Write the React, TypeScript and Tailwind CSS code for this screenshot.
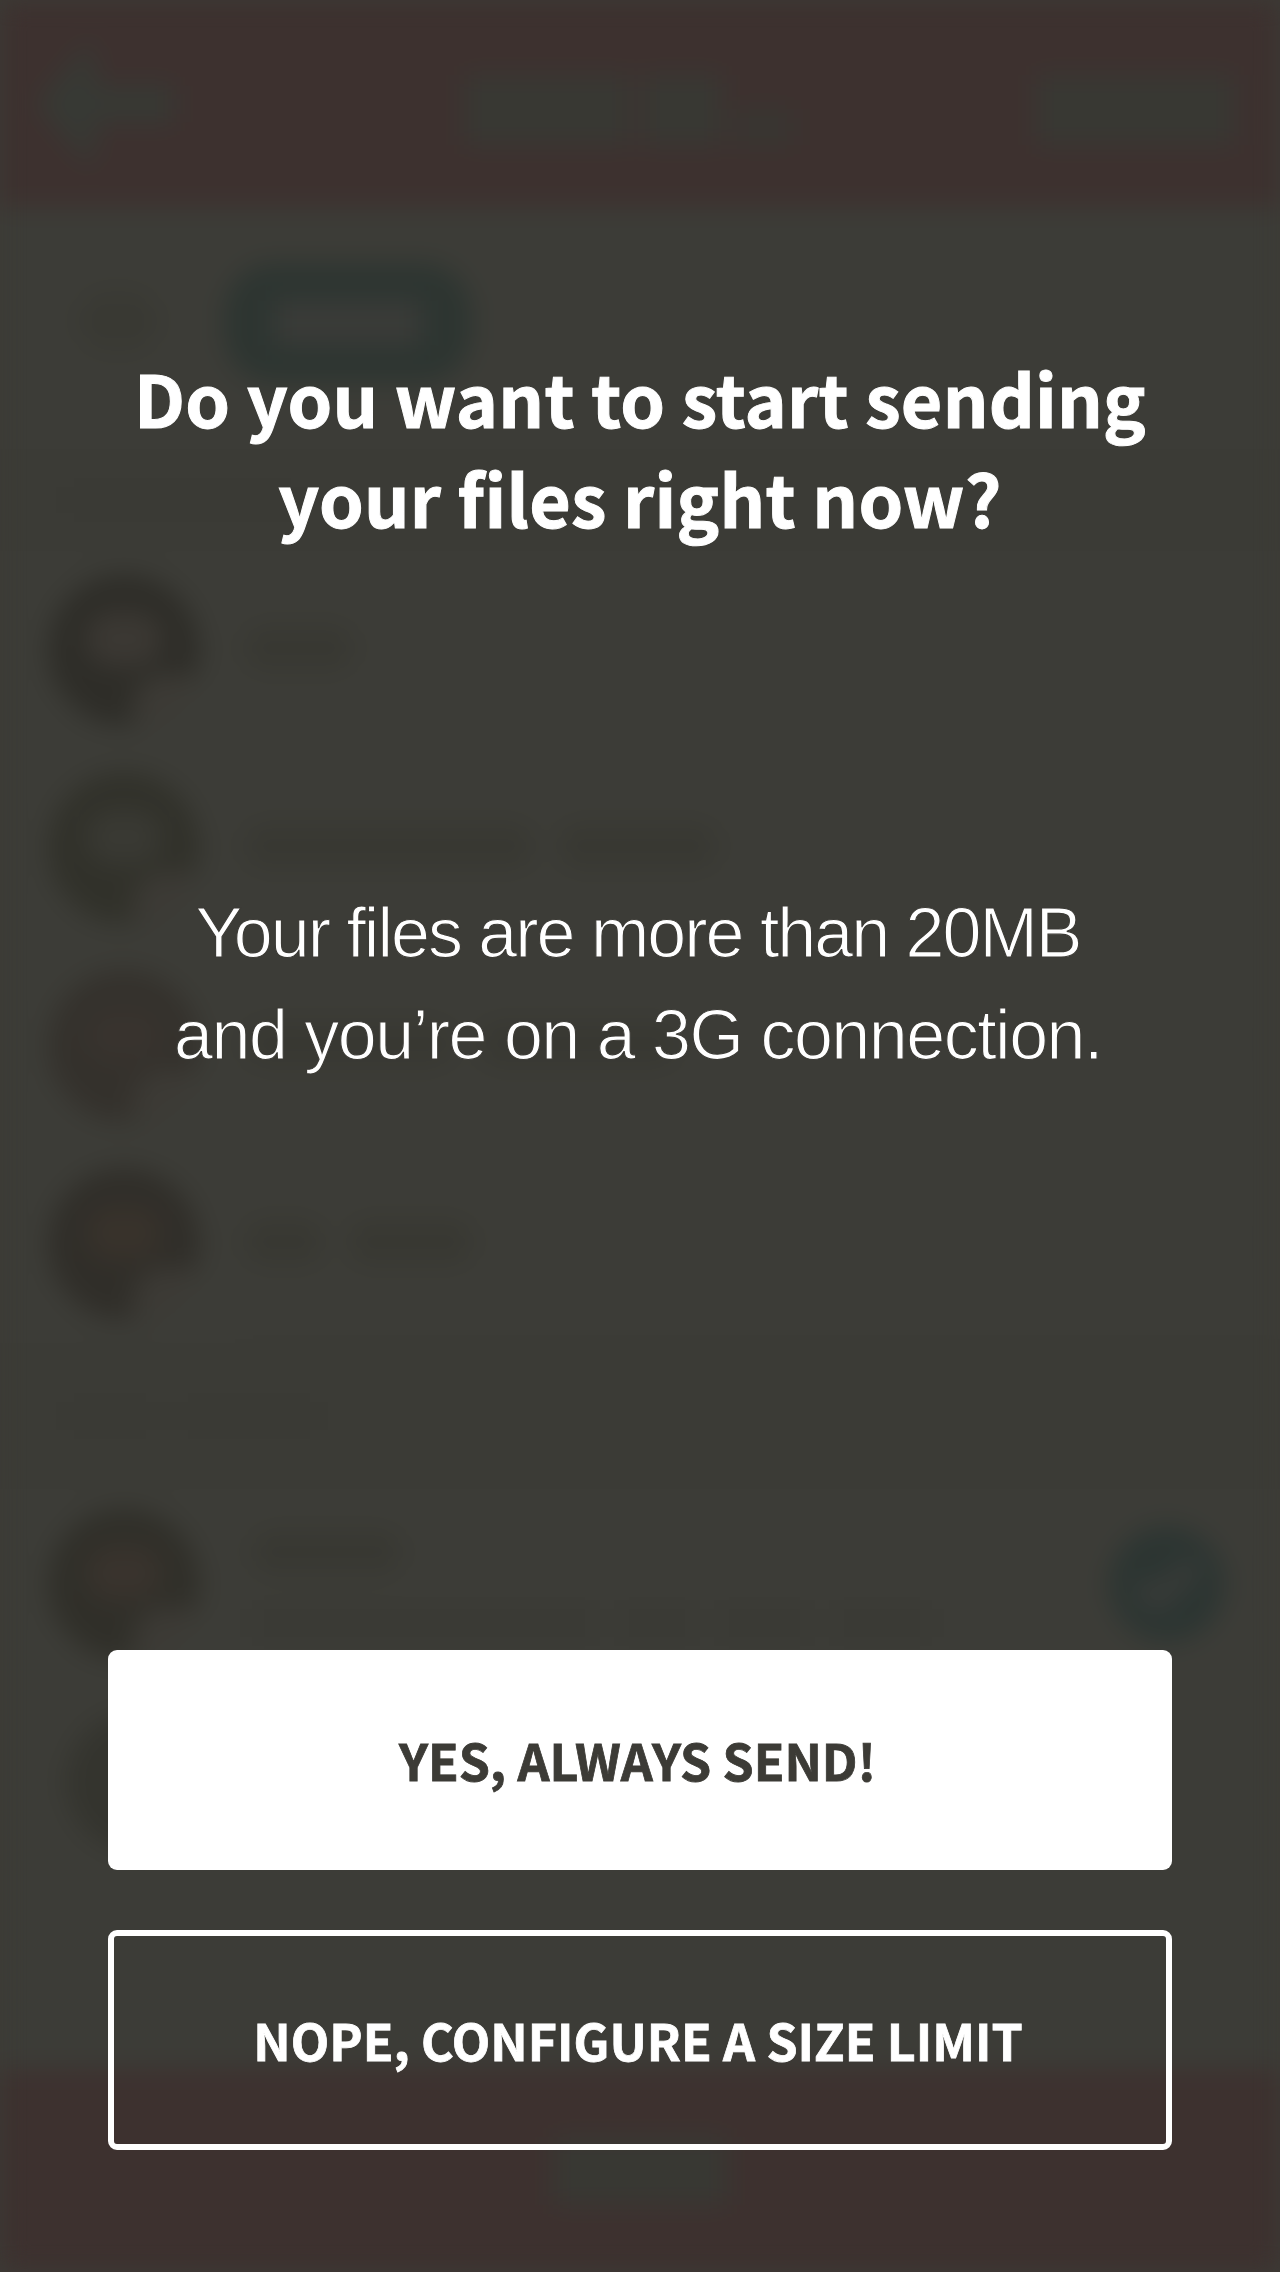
type Contact = { bars: string[]; tone: string; accent: string };

const contacts: Contact[] = [
  { bars: ["w-[110px]"], tone: "bg-[#2e2d28]", accent: "bg-[#3b3833]" },
  { bars: ["w-[290px]", "w-[160px]"], tone: "bg-[#31312a]", accent: "bg-[#393933]" },
  { bars: ["w-[210px]", "w-[200px]"], tone: "bg-[#34312c]", accent: "bg-[#38332e]" },
  { bars: ["w-[80px]", "w-[125px]"], tone: "bg-[#302e29]", accent: "bg-[#38322b]" },
];

function Avatar({ tone, accent }: { tone: string; accent: string }) {
  return (
    <div className={`relative h-[152px] w-[152px] shrink-0 overflow-hidden rounded-full ${tone}`}>
      <div className={`absolute left-[38px] top-[38px] h-[54px] w-[76px] rounded-full ${accent}`} />
      <div className="absolute -right-3 -bottom-4 h-[68px] w-[80px] rounded-full bg-[#3c3a35]" />
      <div className="absolute -bottom-4 -left-8 h-[52px] w-[60px] rounded-full bg-[#3a3934]" />
    </div>
  );
}

function Backdrop() {
  return (
    <div aria-hidden="true" className="flex h-[2272px] w-full flex-col bg-[#3c3c37] blur-[13px]">
      <header className="flex h-[207px] shrink-0 items-center justify-between bg-[#3d312f] pr-[46px] pl-[36px]">
        <svg width="138" height="136" viewBox="0 0 120 112" fill="#373934">
          <path d="M48 0 L0 56 L48 112 L54 72 H120 V40 H54 Z" />
        </svg>
        <div className="flex items-end gap-3 pl-[48px] pt-[12px]">
          <div className="h-[70px] w-[166px] bg-[#383833]" />
          <div className="h-[70px] w-[80px] bg-[#383833]" />
          <div className="h-[36px] w-[60px] bg-[#383631]" />
        </div>
        <div className="mt-[12px] h-[70px] w-[198px] bg-[#383833]" />
      </header>

      <div className="flex h-[242px] shrink-0 items-start gap-[66px] pt-[56px] pl-[78px]">
        <div className="mt-7 h-[60px] w-[80px] rounded-full bg-[#393933]" />
        <div className="flex h-[120px] w-[248px] items-center justify-center rounded-[50px] bg-[#2d3531]">
          <div className="h-[44px] w-[146px] bg-[#3a3b38]" />
        </div>
      </div>

      <div className="flex h-[102px] shrink-0 items-center bg-[#3b3b36] pl-[65px]">
        <div className="h-[26px] w-[235px] bg-[#393934]" />
      </div>

      {contacts.map((c, i) => (
        <div key={i} className="flex h-[198px] shrink-0 items-center gap-[44px] pl-[48px]">
          <Avatar tone={c.tone} accent={c.accent} />
          <div className="flex h-full grow items-center gap-6 border-b-4 border-[#3a3a35]">
            {c.bars.map((w, j) => (
              <div key={j} className={`h-[44px] rounded-full bg-[#383832] ${w}`} />
            ))}
            <div className="mr-[60px] ml-auto h-[106px] w-[106px] rounded-full border-6 border-[#3a3a35]" />
          </div>
        </div>
      ))}

      <div className="flex h-[146px] shrink-0 items-center gap-6 bg-[#3b3b36] pl-[65px]">
        <div className="h-[28px] w-[90px] bg-[#393934]" />
        <div className="h-[28px] w-[140px] bg-[#393934]" />
      </div>

      <div className="flex h-[190px] shrink-0 items-center gap-[52px] pr-[55px] pl-[48px]">
        <Avatar tone="bg-[#302f29]" accent="bg-[#39332d]" />
        <div className="flex flex-col gap-[36px]">
          <div className="h-[42px] w-[150px] rounded-full bg-[#383832]" />
          <div className="flex gap-5">
            <div className="h-[28px] w-[345px] bg-[#393934]" />
            <div className="h-[28px] w-[80px] bg-[#393934]" />
            <div className="h-[28px] w-[95px] bg-[#393934]" />
            <div className="h-[28px] w-[100px] bg-[#393934]" />
          </div>
        </div>
        <div className="ml-auto flex h-[116px] w-[116px] items-center justify-center rounded-full bg-[#2c3532]">
          <svg width="64" height="50" viewBox="0 0 64 50" fill="none" stroke="#3d3d3a" strokeWidth="15">
            <path d="M4 26 L22 42 L60 5" />
          </svg>
        </div>
      </div>

      <div className="flex h-[206px] shrink-0 items-center pl-[66px]">
        <div className="h-[140px] w-[150px] rounded-full bg-[#34342e]" />
      </div>

      <div className="grow" />

      <footer className="flex h-[203px] shrink-0 items-center justify-center bg-[#3d312f]">
        <div className="h-[68px] w-[174px] bg-[#383833]" />
      </footer>
    </div>
  );
}

export default function App() {
  return (
    <main className="relative h-[2272px] w-[1280px] overflow-hidden bg-[#3c3b36]">
      <Backdrop />
      <section
        role="dialog"
        aria-labelledby="send-title"
        className="absolute inset-0 flex flex-col items-center px-[108px] pt-[347px] pb-[122px] text-center text-white"
      >
        <h1
          id="send-title"
          className="font-['Noto_Sans_CJK_JP',sans-serif] text-[71.5px] leading-[100px] font-bold tracking-[0.25px] whitespace-nowrap [-webkit-text-stroke:1px_white]"
        >
          Do you want to start sending
          <br />
          your files right now?
        </h1>

        <p className="mt-[335px] pr-[4px] font-['Liberation_Sans',sans-serif] text-[70px] leading-[102.4px] whitespace-nowrap [-webkit-text-stroke:1.2px_#3c3b36]">
          <span className="tracking-[-2px]">Your files are more than 20MB</span>
          <br />
          <span className="tracking-[-1.5px]">and you’re on a 3G connection.</span>
        </p>

        <div className="mt-auto flex w-full flex-col gap-[60px] font-['Noto_Sans_CJK_JP',sans-serif] text-[50px] leading-[60px] font-bold">
          <button className="h-[220px] rounded-[9px] bg-white pr-[5px] pb-[2px] text-[#3c3b36] [-webkit-text-stroke:0.8px_#3c3b36]">
            YES, ALWAYS SEND!
          </button>
          <button className="h-[220px] rounded-[9px] border-6 border-white pr-[4px] pb-[2px] text-white [-webkit-text-stroke:0.8px_white]">
            NOPE, CONFIGURE A SIZE LIMIT
          </button>
        </div>
      </section>
    </main>
  );
}
